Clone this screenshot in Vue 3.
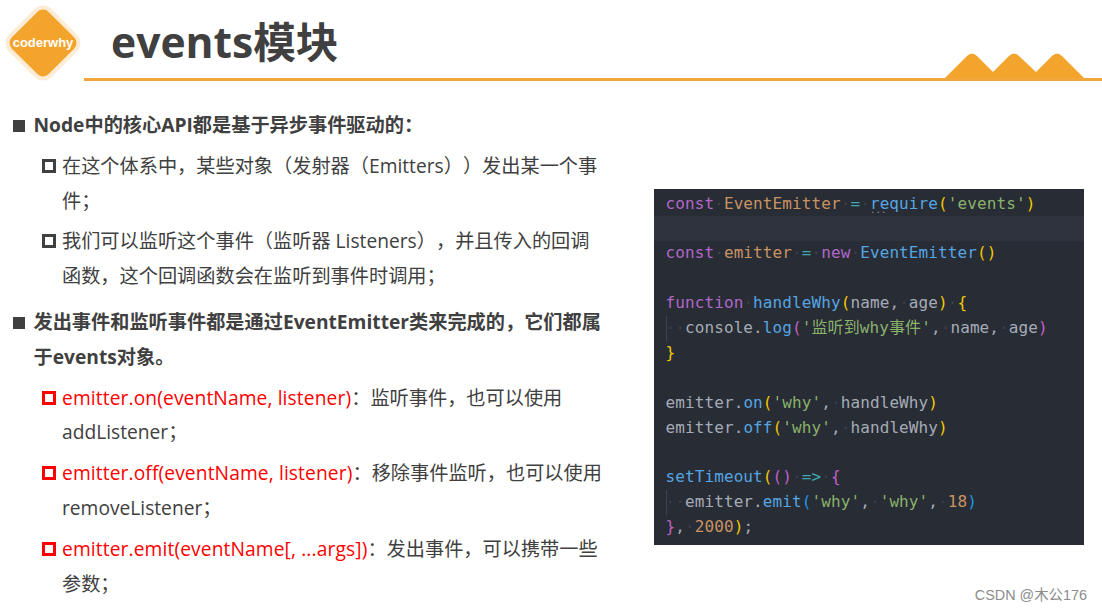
<script setup>
const code = [
  [['p','const'],['w','·'],['o','EventEmitter'],['w','·'],['t','='],['w','·'],['b','require'],['y','('],['g',"'events'"],['y',')']],
  [],
  [['p','const'],['w','·'],['o','emitter'],['w','·'],['t','='],['w','·'],['p','new'],['w','·'],['b','EventEmitter'],['y','()']],
  [],
  [['p','function'],['w','·'],['b','handleWhy'],['y','('],['n','name,'],['w','·'],['n','age'],['y',')'],['w','·'],['y','{']],
  [['w','··'],['n','console.'],['b','log'],['k','('],['g',"'监听到why事件'"],['n',','],['w','·'],['n','name,'],['w','·'],['n','age'],['k',')']],
  [['y','}']],
  [],
  [['n','emitter.'],['b','on'],['y','('],['g',"'why'"],['n',','],['w','·'],['n','handleWhy'],['y',')']],
  [['n','emitter.'],['b','off'],['y','('],['g',"'why'"],['n',','],['w','·'],['n','handleWhy'],['y',')']],
  [],
  [['b','setTimeout'],['y','('],['k','()'],['w','·'],['t','=>'],['w','·'],['k','{']],
  [['w','··'],['n','emitter.'],['b','emit'],['c','('],['g',"'why'"],['n',','],['w','·'],['g',"'why'"],['n',','],['w','·'],['o','18'],['c',')']],
  [['k','}'],['n',','],['w','·'],['o','2000'],['y',')'],['n',';']],
]
const guided = [5, 12]
</script>

<template>
  <div class="slide">
    <header class="head">
      <div class="logo">
        <svg width="80" height="80" viewBox="0 0 80 80">
          <rect x="12" y="12" width="56" height="56" rx="10" transform="rotate(45 40 40)" fill="#f2a42d" stroke="#fcecd5" stroke-width="4"/>
        </svg>
        <span class="logo-text">coderwhy</span>
      </div>
      <h1 class="title">events模块</h1>
      <svg class="hills" width="142" height="28" viewBox="0 0 142 28">
        <path d="M0 27 L23 4 Q28 -1 33 4 L49 20 L65 4 Q70 -1 75 4 L92 20 L108 4 Q113 -1 118 4 L141 27 Z" fill="#f2a42d"/>
      </svg>
    </header>

    <main class="body">
      <section class="text">
        <div class="l1"><i class="sq"></i><p>Node中的核心API都是基于异步事件驱动的：</p></div>
        <div class="l2"><i class="box"></i><p>在这个体系中，某些对象（发射器（Emitters））发出某一个事件；</p></div>
        <div class="l2"><i class="box"></i><p>我们可以监听这个事件（监听器 Listeners），并且传入的回调函数，这个回调函数会在监听到事件时调用；</p></div>
        <div class="l1 second"><i class="sq"></i><p>发出事件和监听事件都是通过EventEmitter类来完成的，它们都属于events对象。</p></div>
        <div class="l2"><i class="box red"></i><p><span class="hl">emitter.on(eventName, listener)</span>：监听事件，也可以使用addListener；</p></div>
        <div class="l2"><i class="box red"></i><p><span class="hl">emitter.off(eventName, listener)</span>：移除事件监听，也可以使用removeListener；</p></div>
        <div class="l2"><i class="box red"></i><p><span class="hl">emitter.emit(eventName[, ...args])</span>：发出事件，可以携带一些参数；</p></div>
      </section>

      <section class="code">
        <div v-for="(line, i) in code" :key="i" class="line" :class="{ cur: i === 1, guide: guided.includes(i) }">
          <span v-for="(tok, j) in line" :key="j" :class="tok[0]">{{ tok[1] }}</span>
        </div>
        <span class="more">...</span>
      </section>
    </main>

    <footer class="mark">CSDN @木公176</footer>
  </div>
</template>

<style>
html, body { margin: 0; background: #fff; }
</style>

<style scoped>
.slide {
  width: 1102px;
  height: 613px;
  position: relative;
  overflow: hidden;
  background: #fff;
  font-family: "Open Sans", "Noto Sans CJK SC", sans-serif;
  color: #404040;
  text-spacing-trim: space-all;
}
.head {
  height: 78px;
  padding-left: 3px;
  display: flex;
  align-items: flex-start;
  position: relative;
}
.head::after {
  content: "";
  position: absolute;
  left: 84px;
  right: 0;
  top: 78px;
  height: 3px;
  background: #f2a73a;
}
.logo {
  width: 80px;
  height: 80px;
  margin-top: 3px;
  position: relative;
  flex: none;
}
.logo svg { display: block; }
.logo-text {
  position: absolute;
  left: 0;
  right: 0;
  top: 31px;
  text-align: center;
  font: bold 13px/18px "Liberation Sans", sans-serif;
  color: #fff;
}
.title {
  margin: 8px 0 0 28px;
  font-size: 42.6px;
  line-height: 66px;
  font-weight: 700;
  color: #404040;
}
.hills { position: absolute; left: 944px; top: 52px; }
.body {
  display: flex;
  align-items: flex-start;
  padding-top: 30px;
}
.text { width: 654px; flex: none; }
p { margin: 0; }
.l1, .l2 { display: flex; line-height: 34.8px; }
.l1 {
  padding-left: 13px;
  font-size: 19.2px;
  font-weight: 700;
  width: 600px;
}
.l1 p { margin-left: 8.5px; flex: 1; }
.sq { width: 12px; height: 12px; margin-top: 12px; background: #404040; flex: none; }
.l2 {
  padding-left: 41.5px;
  width: 562px;
  font-size: 19.2px;
  margin-top: 6px;
}
.l2 p { margin-left: 6.5px; flex: 1; }
.box {
  width: 14px;
  height: 14px;
  box-sizing: border-box;
  margin-top: 10px;
  border: 3px solid #404040;
  flex: none;
}
.box.red { border-color: #f00; }
.hl { color: #f00; letter-spacing: 0.12px; }
.second { margin-top: 11px; }
.code {
  width: 430px;
  height: 356px;
  margin-top: 81px;
  padding-top: 2.5px;
  box-sizing: border-box;
  background: #282c35;
  position: relative;
  font: 16px/24.92px "DejaVu Sans Mono", "Noto Sans CJK SC", monospace;
  letter-spacing: 0.1px;
  color: #abb2bf;
}
.line { height: 24.92px; padding-left: 11.5px; white-space: pre; position: relative; }
.cur { background: #2e333d; }
.guide::before {
  content: "";
  position: absolute;
  left: 12px;
  top: 0;
  bottom: 0;
  width: 1px;
  background: #3e434d;
}
.p { color: #b267c8; }
.o { color: #c89362; }
.b { color: #55a5e2; }
.t { color: #3fa7ad; }
.g { color: #8ab26b; }
.y { color: #f0c800; }
.k { color: #c25fc4; }
.c { color: #1f94e6; }
.n { color: #a5abb6; }
.w { color: #3c414b; }
.more {
  position: absolute;
  left: 216px;
  top: 15px;
  font-size: 9px;
  line-height: 12px;
  color: #8b909a;
}
.mark {
  position: absolute;
  right: 15px;
  bottom: 8px;
  font-size: 14.4px;
  line-height: 20px;
  color: #8c8c8c;
  font-family: "Liberation Sans", "Noto Sans CJK SC", sans-serif;
}
</style>
